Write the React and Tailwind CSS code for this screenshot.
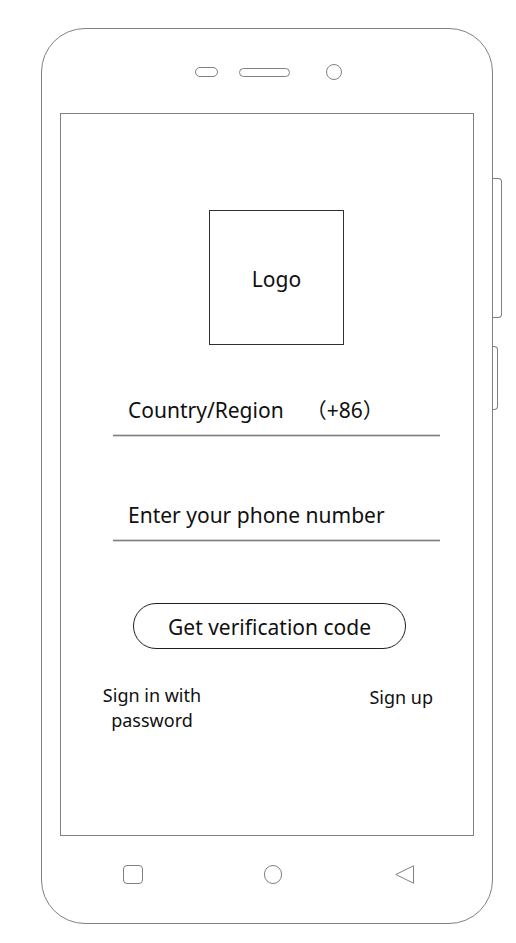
import React from "react";

function Field({ children }) {
  return (
    <div className="flex h-[51px] items-center border-b border-[#808080] pt-0.5 pl-[15px] shadow-[0_1px_0_#d4d4d4,inset_0_-1px_0_#d4d4d4]">
      {children}
    </div>
  );
}

function TopBar() {
  return (
    <div className="flex h-[84px] items-center justify-center pt-0.5 pl-0.5">
      <span className="h-[10px] w-[23px] rounded-full border border-[#808080]" />
      <span className="ml-[21px] h-[9px] w-[51px] rounded-full border border-[#808080]" />
      <span className="ml-[36px] size-4 rounded-full border border-[#808080]" />
    </div>
  );
}

function NavBar() {
  return (
    <div className="flex h-[87px] items-center justify-between pr-[59px] pb-[10px] pl-[63px]">
      <button type="button" aria-label="Recent apps">
        <span className="block h-[19px] w-5 rounded-[4px] border border-[#808080]" />
      </button>
      <button type="button" aria-label="Home" className="pl-2">
        <span className="block h-[19px] w-[18px] rounded-full border border-[#808080]" />
      </button>
      <button type="button" aria-label="Back">
        <svg width="20" height="19" viewBox="0 0 20 19" fill="none" stroke="#808080">
          <path d="M18.5 0.8V18.2L0.8 9.5L18.5 0.8Z" />
        </svg>
      </button>
    </div>
  );
}

function SignInForm() {
  return (
    <form
      className="flex flex-col border border-[#808080] pt-24 pb-[102px] text-[21px]"
      onSubmit={(e) => e.preventDefault()}
    >
      <div className="flex flex-col pr-[33px] pl-[52px]">
        <div className="flex size-[135px] items-center justify-center self-center border border-[#303030] pt-1">
          Logo
        </div>
        <div className="mt-10">
          <Field>
            <label htmlFor="region">Country/Region</label>
            <select id="region" className="ml-[22px] appearance-none bg-transparent">
              <option>（+86）</option>
            </select>
          </Field>
        </div>
        <div className="mt-[54px]">
          <Field>
            <input
              type="tel"
              aria-label="Phone number"
              placeholder="Enter your phone number"
              className="w-full bg-transparent outline-none placeholder:text-[#101010]"
            />
          </Field>
        </div>
      </div>
      <button
        type="submit"
        className="mt-[62px] mr-[67px] ml-[72px] h-[46px] rounded-full border border-[#202020] pt-1"
      >
        Get verification code
      </button>
      <div className="mt-[34px] flex items-start justify-between pr-10 pl-9 text-center text-[18px] leading-[25px]">
        <a href="#password" className="w-[110px]">
          Sign in with password
        </a>
        <a href="#signup" className="pt-0.5">
          Sign up
        </a>
      </div>
    </form>
  );
}

export default function App() {
  return (
    <main className="bg-white pt-7 pr-[14px] pb-[19px] pl-[41px] font-['Noto_Sans','Noto_Sans_CJK_SC',sans-serif] text-[#101010]">
      <div className="flex items-start">
        <div className="flex-1 rounded-[44px] border border-[#808080] px-[18px]">
          <TopBar />
          <SignInForm />
          <NavBar />
        </div>
        <div className="flex w-[9px] flex-col items-start pt-[150px]">
          <span className="h-[140px] w-[9px] rounded-r-[4px] border border-l-0 border-[#808080]" />
          <span className="mt-7 h-16 w-[5px] rounded-r-[4px] border border-l-0 border-[#808080]" />
        </div>
      </div>
    </main>
  );
}
